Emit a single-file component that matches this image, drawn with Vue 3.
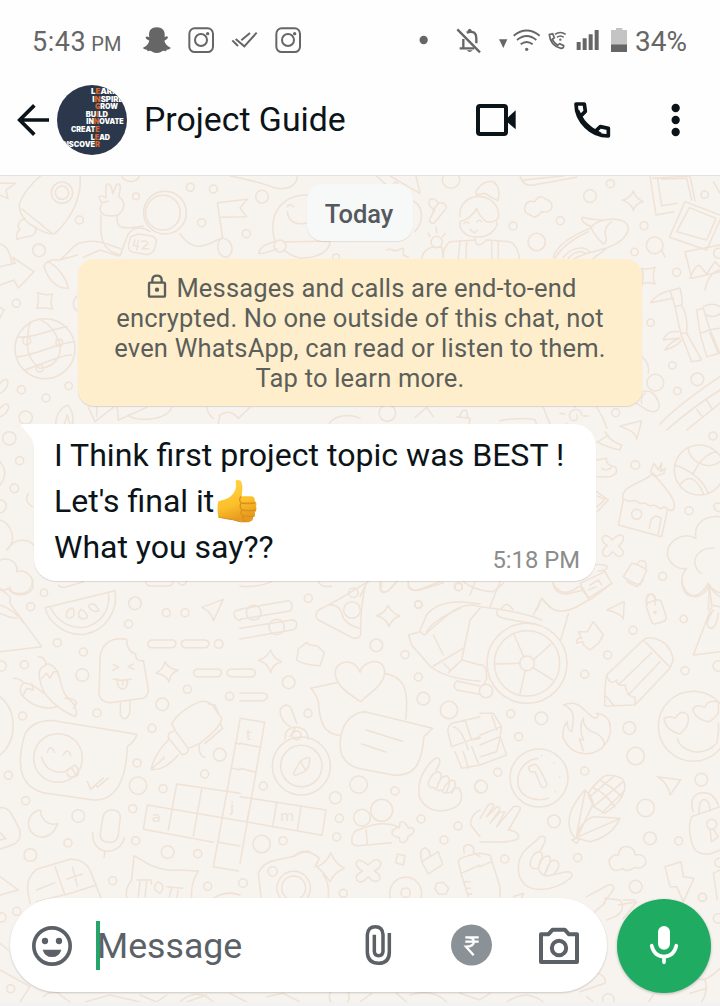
<script setup>
const mottos = [
  { y: 282, x: 273, w: 82, a: 'L', b: 'E', c: 'ARN' },
  { y: 305, x: 277, w: 93, a: 'I', b: 'N', c: 'SPIRE' },
  { y: 328, x: 285, w: 69, a: '', b: 'G', c: 'ROW' },
  { y: 350, x: 257, w: 67, a: 'BU', b: 'I', c: 'LD' },
  { y: 373, x: 259, w: 112, a: 'IN', b: 'N', c: 'OVATE' },
  { y: 396, x: 213, w: 86, a: 'CREAT', b: 'E', c: '' },
  { y: 419, x: 272, w: 58, a: 'L', b: 'E', c: 'AD' },
  { y: 441, x: 184, w: 116, a: 'DISCOVE', b: 'R', c: '' },
]

// Wallpaper doodles, grouped in tiles; three units inside a tile are one pixel.
const tiles = [
  {
    x: 0, y: 170,
    circles: [[186, 68, 32], [186, 68, 20], [408, 79, 10], [238, 150, 12], [117, 241, 19], [49, 400, 12], [571, 52, 12], [640, 57, 12], [605, 158, 12], [786, 80, 19], [739, 191, 12], [495, 128, 64], [489, 128, 52], [840, 228, 18], [135, 536, 90], [80, 512, 12], [178, 518, 10], [119, 595, 11], [206, 648, 11], [64, 659, 12], [138, 684, 12], [77, 743, 20], [1008, 262, 10]],
    paths: [
      'M58 104 C65 75 95 40 122 18 M240 18 C246 80 215 145 165 190 C145 195 125 185 104 171 C80 158 58 135 58 104 M66 117 L158 192 M75 145 C50 155 52 175 60 178 C45 190 50 210 52 208 C75 195 110 210 108 171',
      'M0 40 L46 40 L18 60 L24 86 L0 75', 'M365 18 C375 40 410 40 418 18',
      'M306 98 C290 80 300 72 318 84 L318 46 C325 36 336 44 338 72 L350 44 C360 36 365 50 356 80 C378 92 376 120 352 136 C330 140 305 140 300 118 Z M306 98 L325 94 M303 136 C300 210 305 240 360 255 M352 136 C345 175 365 180 430 168 M360 258 L383 195 C395 175 420 165 450 185',
      'M392 200 L415 192 L455 198 C470 202 472 215 465 232 C460 250 450 255 435 253 L400 247 C385 243 383 235 387 220 Z M405 210 L400 226 L416 230 M415 210 L410 240 M425 214 C440 210 448 218 440 224 L426 236 L445 236',
      'M362 236 C310 220 290 205 235 220 C210 235 200 255 180 270 C150 265 130 280 133 292 C145 330 170 355 205 355 M180 270 L232 255 M142 275 C170 285 200 325 205 355 M250 262 L300 240 L355 258',
      'M652 98 L742 88 L720 114 L740 140 L664 142 M652 98 L668 204 M668 204 C645 215 650 260 680 262 C705 250 700 210 668 204 M540 192 C590 260 630 215 668 204',
      'M690 18 C760 30 800 45 830 55 C860 60 890 50 892 18',
      'M825 215 C810 160 820 110 870 85 Q895 74 925 75 M862 110 Q868 98 880 110 M862 125 C865 158 890 165 920 160 M825 215 C800 220 780 230 776 250 C790 255 815 240 832 237 M852 216 L990 213 C990 240 960 265 900 264 C870 258 855 242 850 240',
      'M0 222 C15 225 30 240 35 280 M0 290 L45 280 L38 262 L102 305 L55 354 L42 330 L0 345', 'M113 368 Q134 378 158 372 Q148 393 158 418 Q134 410 110 415 Q119 394 113 368 Z',
      'M52 500 C90 510 170 470 202 470 M50 560 C95 560 170 520 220 515 M75 600 C110 590 190 550 215 555 M90 455 C80 500 70 560 119 595 M119 595 C180 590 185 540 178 518 C165 480 145 460 120 448',
      'M0 640 Q22 615 24 640 Q20 660 0 670 M0 715 Q24 690 26 712 Q20 735 0 740 M0 412 L12 420 L0 444 M168 766 C165 735 185 710 205 705 C225 740 225 765 200 780 M190 770 L202 735 L212 770',
      'M230 378 Q210 405 230 422 M265 712 L285 755 L340 712 M290 712 L290 740 M352 712 L355 750 L440 712 M385 735 C400 755 500 755 515 712 M620 712 Q625 735 640 745 M655 760 L660 735 Q690 715 715 745 L750 712 M985 765 C1000 735 1050 730 1080 745',
    ],
  },
  {
    x: 360, y: 170,
    circles: [[273, 29, 26], [459, 168, 12], [530, 216, 26], [601, 152, 12], [690, 78, 19], [751, 41, 12], [852, 167, 12], [824, 246, 11], [884, 226, 25], [1034, 74, 11], [950, 307, 12], [872, 458, 11], [937, 586, 11], [886, 638, 25], [952, 663, 11], [1012, 628, 19], [1076, 250, 15], [767, 728, 12], [230, 216, 17], [82, 729, 25]],
    paths: [
      'M50 18 L90 55 L105 35 L145 65 M90 18 L180 70 L168 18 M150 90 C190 100 195 150 165 185',
      'M209 89 Q225 80 235 100 L250 98 Q265 110 255 120 L222 160 Q205 160 210 145 L225 118 Q200 110 209 89 M235 100 L218 122',
      'M300 140 C295 105 325 75 365 80 C405 85 420 120 415 145 Q400 160 378 155 Q355 135 350 115 Q335 145 300 155 M350 75 Q345 60 355 55 Q370 30 400 35 Q425 55 413 92 Q390 80 375 70 Z M300 155 C295 180 320 200 340 200 Q380 205 400 182 Q415 165 410 155 M312 160 q8 -8 15 0 M350 155 q8 -8 15 0 M330 178 q15 18 22 2',
      'M345 205 C345 230 360 230 380 210 L450 215 Q475 230 478 265 M345 210 L270 215 Q250 230 248 262 M300 212 L295 265 M320 212 L318 265 M395 212 L395 265 M415 212 L415 265',
      'M185 265 Q190 240 215 232 L245 232 Q250 250 250 262 M210 200 L205 190 M230 188 L228 170 M248 200 L255 190 M80 240 Q90 235 105 243 L130 235 L130 255 L145 262',
      'M495 110 Q500 90 525 95 Q535 70 558 88 Q580 95 575 115 Q565 130 545 125 Q525 150 512 135 Q490 130 495 110 Z',
      'M480 18 Q490 50 520 45 L650 22 M490 30 L610 18',
      'M580 262 C590 225 640 195 690 175 Q710 150 750 148 C790 145 810 160 803 185 C790 215 760 230 700 245 Q655 255 630 275 M690 168 Q660 155 667 142 Q700 150 725 150 M692 172 Q710 205 730 222 Q745 215 735 190 Q735 170 755 155 M585 265 Q610 220 685 185 M610 262 C640 225 680 230 690 248 M625 265 Q650 235 680 250 M700 265 L740 235',
      'M820 62 Q825 85 850 95 Q825 100 820 122 Q815 100 787 90 Q812 85 820 62 Z',
      'M870 18 L888 135 L940 125 M878 25 L990 18 L1005 92 M893 28 L905 107 L950 100 M905 28 L980 25 L995 90 M975 95 L1080 135 M975 95 L928 202 L1040 240 L1080 150 M988 113 L1068 145 L1040 210 L950 185 Z M905 240 L915 262',
      'M975 245 L1080 225 M975 245 L995 325 L1080 305 M990 325 Q1010 275 1022 290 L1040 312 L1065 275 L1080 290 M1035 360 Q1045 310 1078 300 M845 295 Q860 300 885 292 Q875 325 885 342 Q860 335 845 342 Q855 315 845 295 M1060 35 L1080 70',
      'M930 362 L960 354 Q970 395 965 405 L945 410 Q940 390 930 362 M945 410 L962 490 L980 490 Q985 440 965 405 M962 490 L995 575 L1025 570 L980 490 M930 362 Q890 370 872 398 Q910 390 940 385 M955 485 Q920 480 910 510 Q940 505 960 505 Q930 515 915 540 Q950 530 965 510',
      'M1010 420 L1030 415 L1050 480 L1020 490 Z M1020 490 L1040 560 L1080 550 L1050 480 M1050 490 L1075 550 M1030 410 Q1055 395 1080 410 M1040 435 Q1060 445 1080 432 M1045 480 L1080 475',
      'M845 560 Q870 580 865 610 M848 665 Q885 655 898 705 Q895 735 860 720 L830 700 M855 670 Q840 680 845 700',
      'M900 762 C950 710 1020 660 1080 620 M920 780 Q1000 710 1080 660 M980 780 L1080 700 M1025 738 L1010 718 M1055 715 L1040 690',
      'M550 712 Q560 745 580 780 M710 712 Q735 750 740 775 M165 742 L200 712 L220 740 M290 740 L330 745 L325 780 M300 742 Q300 720 318 720 Q325 735 320 744 M420 752 Q500 740 525 750 L535 775 M665 735 C665 715 635 712 628 735 C628 760 660 755 650 735 M645 712 L645 703 M600 730 L615 732 M685 738 L670 738 M620 760 L610 770',
    ],
  },
  {
    x: 0, y: 410,
    circles: [[28, 85, 20], [59, 152, 12], [43, 235, 13], [132, 548, 11], [92, 590, 12]],
    paths: [
      'M0 155 C20 180 18 200 0 225 M0 270 C20 270 25 290 10 305 L0 310 M0 330 C30 335 55 390 20 420 M85 250 Q70 275 98 290 M20 420 C45 380 90 385 105 410 M0 450 C30 440 55 460 50 485 C80 475 105 505 98 535 C80 565 30 555 25 535 C10 545 0 540 0 540',
    ],
  },
  {
    x: 360, y: 410,
    circles: [[1059, 78, 12], [826, 165, 13], [1018, 180, 75], [987, 302, 12], [830, 313, 15], [908, 499, 12], [296, 531, 11], [175, 584, 11]],
    paths: [
      'M780 48 L845 32 L830 88 Q825 68 810 62 Z M735 65 Q750 95 785 105 L780 120 Q735 110 710 95 M745 75 L715 95 M710 150 L740 145 Q735 165 765 170 Q780 190 750 200 L710 200 M725 175 Q740 185 755 172',
      'M945 165 C990 180 1030 210 1045 250 M985 115 C985 150 1040 185 1080 155 M960 225 C985 190 1010 205 1030 250 M1000 190 Q1030 130 1070 125',
      'M788 265 C785 225 840 225 880 190 C910 230 950 265 942 295 C935 310 920 295 912 290 C900 305 890 285 880 285 C865 295 860 275 850 280 C835 285 830 268 820 272 C805 280 800 270 788 265 M790 270 L775 345 L905 380 L922 302 M868 355 L873 330 Q885 310 903 325 L895 372 M872 185 L882 160 L895 180 L905 158 L902 185 L915 175 L912 190 L885 200 Z',
      'M728 382 Q738 368 757 390 Q778 366 790 380 Q793 395 775 408 Q797 425 788 435 Q775 447 758 425 Q742 448 730 435 Q722 420 742 406 Q722 395 728 382 Z',
      'M790 500 L815 460 Q840 465 860 480 L840 525 Q815 520 790 500 M832 463 Q838 445 855 455 Q862 470 855 478 M710 245 L745 270 L712 305 M712 258 L735 268 L712 290',
      'M1080 320 C1025 315 1000 350 1008 385 C970 365 920 390 922 435 C930 470 965 480 980 475 C950 510 975 560 1010 560 Q1035 555 1048 525 Q1060 550 1080 560 M1048 525 L1045 600 M1062 415 C1020 410 995 445 1008 470 Q1012 485 1025 490 M1080 280 Q1060 275 1062 290 Q1065 305 1080 305',
      'M660 520 L735 485 L755 520 L690 570 Z M690 525 L715 510 L725 525 M580 520 C590 545 620 560 655 530 M700 465 Q730 460 742 470 Q740 485 715 482 M65 520 C55 560 85 550 105 520 M145 525 Q150 545 180 540 L250 518 M310 515 Q350 545 400 545 L430 520 M0 560 L20 520 M530 600 L545 565 L575 595 M860 585 Q855 555 875 552 Q890 565 885 585',
    ],
  },
  {
    x: 0, y: 580,
    circles: [[405, 70, 19], [386, 132, 12], [172, 188, 12], [250, 216, 12], [247, 285, 19], [499, 98, 12], [555, 98, 12], [656, 192, 13], [73, 254, 12], [4, 258, 15], [68, 408, 12], [291, 399, 12], [487, 373, 19], [562, 328, 12], [689, 349, 12], [456, 445, 12], [659, 524, 19], [614, 582, 12], [411, 549, 12], [414, 617, 26], [489, 626, 12], [398, 686, 12], [25, 586, 12], [77, 662, 12], [235, 708, 19], [91, 825, 19], [204, 789, 12], [407, 782, 12], [503, 816, 19], [593, 821, 12], [338, 902, 12], [623, 919, 12], [174, 534, 73]],
    paths: [
      'M135 83 L345 32 C355 90 320 150 255 163 C195 170 145 125 135 83 M152 84 C175 130 220 150 262 140 C305 125 330 90 326 42 M200 112 Q195 90 217 84 Q225 90 221 107 Q210 118 200 112 M238 112 Q232 98 243 88 Q260 95 262 112 Q248 122 238 112 M265 80 Q270 66 286 75 L298 92 Q280 100 265 80',
      'M378 178 C330 170 300 195 300 240 L297 345 Q305 368 330 368 L430 355 Q450 345 443 315 L430 242 Q405 245 407 222 Q380 215 380 178 M340 253 l16 9 l-18 9 M400 252 l-16 8 l17 8 M340 297 Q365 304 395 297 M352 298 Q350 325 368 327 Q385 325 382 300 M368 300 L368 315 M361 368 L361 405 Q375 430 389 400 L390 362',
      'M0 25 L30 50 L30 70 L125 200 L0 215 M0 75 Q45 90 72 130 M50 115 L25 110 L0 100 M30 20 Q30 45 70 40 Q95 35 98 0',
      'M115 230 Q137 230 138 255 Q110 265 120 300 C125 350 180 390 225 410 Q235 400 220 370 C170 330 190 290 165 265 Q145 245 138 255 M125 295 L140 280 L150 295 L160 275 L175 275 M40 295 Q60 295 70 308 Q55 325 65 345 C95 380 140 390 170 380 M70 308 Q100 310 130 340 M70 345 L80 325 L100 330 L95 310 M195 355 Q225 355 230 370 L220 385 M0 350 C55 395 50 485 0 525',
      'M455 180 H518 Q528 182 528 192 Q525 203 515 203 H455 Q444 201 444 191 Q445 181 455 180 M555 180 H616 Q628 183 627 192 Q624 203 615 203 H555 Q544 200 544 191 Q545 181 555 180 M592 268 H656 Q665 270 665 279 Q662 290 652 290 H590 Q582 288 581 279 Q582 268 592 268 M720 268 H690 Q681 271 681 279 Q684 290 695 290 H720 M176 16 Q180 25 200 20 L250 5 M437 5 Q440 19 455 18 H505 Q518 17 520 5 M535 8 Q548 25 560 5',
      'M605 82 L670 58 L640 122 Q635 95 605 82 M720 90 Q700 90 702 105 Q708 120 720 122 M495 245 Q505 268 535 270 Q510 280 507 305 Q495 282 467 279 Q490 270 495 245 Z',
      'M100 435 Q135 415 180 425 L410 463 Q408 480 382 500 C380 560 365 665 280 660 L130 638 C60 620 50 560 70 480 Q75 450 100 435 M125 532 C135 570 170 585 205 572 M142 517 q8 -28 22 0 M190 525 q14 -25 22 2 M195 575 L225 555 Q240 570 234 585 Q210 600 200 580 M215 565 L225 580 M262 605 L272 628 L310 594 M288 614 L292 622 L325 594',
      'M527 455 L515 430 Q540 390 600 365 Q625 360 640 380 L665 415 Q665 440 600 490 L565 505 M527 455 L565 505 Q565 525 545 523 L505 473 Q503 455 520 455 M505 480 Q465 520 453 568 Q490 575 535 525 M453 568 L485 540 Q495 535 490 530 M625 372 L645 375 L655 400 M598 495 Q595 530 615 532 M660 430 L668 445 L615 490',
      'M720 640 L530 612 L505 750 M442 675 L720 722 M442 675 L430 748 L640 787 M605 628 L580 768 M720 420 L680 640 L640 860 L715 873 M698 565 L720 570 M655 787 L720 798 M705 490 L720 492',
      'M335 690 Q365 690 360 720 L355 765 Q350 790 325 787 Q298 785 301 760 L308 715 Q312 690 335 690 M278 758 C275 830 360 830 373 772 M315 812 L312 832',
      'M122 690 C75 695 70 765 125 772 Q160 770 173 730 Q155 738 138 725 Q120 710 122 690 Z M0 683 C35 680 40 720 58 745 Q68 785 35 795 L0 808 M0 758 L18 776 L0 780 M0 890 L55 930 L0 945',
      'M90 970 L83 930 Q80 890 110 868 L210 838 Q250 835 270 870 L305 960 M165 860 L195 945 L290 915 M110 930 L165 908 M200 898 L247 882 M218 862 L232 918 M190 945 L110 965',
      'M383 960 Q370 930 395 900 L402 827 L450 855 Q500 875 530 870 L595 873 Q570 910 575 960 M412 900 L452 900 L455 912 M420 905 L415 950 M440 905 L435 950 M475 905 Q450 925 480 940 Q500 920 475 905 M500 920 L548 925 M515 925 L508 950 M535 930 L530 955 M640 955 Q680 930 720 945',
    ],
    letters: [[455, 727, 'a'], [690, 697, 'j']],
  },
  {
    x: 240, y: 580,
    circles: [[205, 55, 12], [340, 38, 14], [336, 90, 25], [535, 73, 11], [409, 196, 19], [495, 224, 12], [146, 307, 19], [204, 400, 12], [535, 291, 12], [550, 356, 19], [627, 390, 26], [170, 466, 13], [184, 558, 87], [184, 558, 62], [70, 618, 12], [286, 653, 18], [356, 614, 26], [465, 633, 12], [425, 691, 33], [366, 713, 25], [298, 715, 12], [290, 771, 12], [65, 792, 26], [129, 782, 12], [543, 717, 12], [654, 738, 12], [612, 780, 12], [98, 874, 14], [161, 924, 50], [161, 924, 36], [310, 940, 12], [497, 938, 14], [497, 940, 48], [9, 909, 13], [41, 98, 22], [110, 141, 23], [655, 20, 12]],
    paths: [
      'M0 88 L145 62 Q160 68 155 85 L150 93 L0 118 M0 145 L155 120 Q170 120 170 132 Q170 148 155 150 L0 177 M0 18 Q50 25 95 5 M235 5 Q245 25 275 18',
      'M228 105 Q230 90 245 85 C300 60 340 30 385 5 M375 20 Q360 90 362 165 Q355 180 335 172 L235 120 Q228 115 228 105 M265 75 Q300 70 310 115 Q330 140 360 145 M443 75 Q455 100 480 108 Q455 115 447 140 Q440 115 410 107 Q438 98 443 75 Z M92 210 Q100 235 124 245 Q97 252 92 278 Q85 250 55 241 Q80 235 92 210 Z',
      'M175 207 L200 187 Q205 197 232 197 L253 218 L240 257 Q190 255 170 240 Z M0 267 H35 Q46 270 46 279 Q45 289 35 291 H0 M0 339 H70 Q83 342 82 350 Q80 360 70 362 H0',
      'M420 5 Q415 50 445 32 L470 5 M505 5 Q500 38 535 30 L600 5 M705 5 L690 45 M720 72 Q600 50 560 105 L540 150 M720 80 Q670 60 605 120 L553 165 L540 155 L506 165 L515 195 L570 258 C610 290 660 300 720 303 M580 165 L610 225 M580 258 L670 205 M665 240 L690 120 L720 85 M625 278 L665 240 L720 255 M650 303 L720 318 M650 303 Q635 320 650 330 L720 343 M560 155 Q580 120 660 85 M610 250 L630 270',
      'M360 277 C365 245 430 225 434 275 C435 315 380 345 362 365 C330 345 285 315 286 280 C285 240 345 230 360 277 Z M290 308 L212 325 Q230 345 235 365 C240 430 250 460 300 467 M434 280 C480 290 510 310 497 418',
      'M375 395 Q345 395 320 425 C300 455 290 510 315 540 Q330 560 365 567 L460 585 C525 590 545 550 552 470 L578 445 Z M378 450 L487 484 M365 492 L437 516',
      'M0 415 L74 427 L0 850 M0 490 L62 502 M0 565 L48 577 M0 650 L258 690 L246 766 L0 722 M35 655 L20 725 M110 668 L98 740 M183 680 L172 752',
      'M150 440 Q120 420 120 390 Q135 365 152 382 L170 430 M165 445 L150 470 M135 478 Q135 440 170 442 Q205 445 204 478 M160 580 L180 545 Q200 530 209 533 Q210 560 195 575 L165 586 Z M182 545 L197 572',
      'M538 650 C530 600 555 560 585 535 Q600 530 600 548 L588 572 M565 610 Q575 575 595 575 Q610 580 600 600 L590 625 M590 625 Q600 585 622 588 Q635 600 620 635 M608 632 Q625 595 643 602 Q650 620 635 640 M565 610 Q565 625 580 622 Q590 635 602 630 Q615 645 635 635 Q640 620 658 625 C675 660 660 690 600 693 Q555 690 538 650',
      'M335 785 Q335 752 360 748 C400 730 440 725 475 740 M335 785 Q338 798 355 797 L455 788 M378 750 L382 792 M480 728 Q488 720 500 735 L505 745 Q520 740 522 752 Q520 765 505 767 Q500 795 480 785 L478 773 Q455 770 456 755 Q465 740 478 743 Z',
      'M720 410 L635 430 Q620 440 625 460 L635 500 L720 470 M640 440 Q665 445 685 510 M675 420 L695 480 L720 475 M645 515 L665 565 L720 555 M670 515 L685 565 M695 500 L715 550 M720 600 Q700 610 705 625 L720 640 M720 690 Q690 705 692 735 L720 770',
      'M63 950 L55 880 Q70 845 110 840 L165 828 Q200 800 238 835 M238 835 L225 860 M250 885 Q270 910 265 955 M165 825 Q185 810 210 815 M272 818 Q285 850 313 865 Q280 880 270 905 Q250 875 230 860 Q260 850 272 818 Z',
      'M348 850 Q355 830 384 855 Q410 828 423 848 Q422 865 403 873 Q425 885 418 900 Q400 912 385 890 Q362 915 350 900 Q343 885 368 873 Q350 865 348 850 M473 822 L495 827 L490 855 L467 848 Z M545 845 L595 815 L608 853 L565 882 Z M545 840 Q535 810 555 803 Q570 810 570 828 M590 910 L610 907 L626 925 L618 942 L597 943 L584 926 Z',
      'M673 820 Q665 790 690 795 Q705 800 700 818 L720 830 M655 845 Q655 830 720 820 M655 845 L663 880 L720 855 M663 880 L685 950 M672 905 H690 M677 925 H690 M682 942 H695',
    ],
    letters: [[18, 480, 't'], [120, 724, 'm']],
  },
  {
    x: 480, y: 580,
    circles: [[141, 250, 120], [141, 250, 98], [141, 250, 22], [611, 117, 11], [459, 151, 12], [383, 225, 12], [314, 283, 12], [615, 272, 12], [715, 258, 16], [184, 415, 19], [92, 401, 12], [116, 470, 12], [18, 333, 20], [53, 577, 12], [3, 620, 19], [177, 594, 87], [314, 573, 12], [448, 444, 19], [467, 528, 26], [640, 439, 105], [497, 684, 26], [664, 599, 19], [222, 724, 19], [510, 775, 19], [596, 783, 12], [293, 833, 12], [74, 837, 12], [467, 920, 19], [667, 952, 12], [718, 848, 13], [695, 733, 15]],
    paths: [
      'M103 165 L132 232 M212 193 L160 240 M218 300 L158 262 M120 340 L136 272 M45 252 L120 250 M0 80 Q130 95 185 120 M52 92 Q45 110 70 115 L165 132 M65 85 Q80 60 100 90 M30 80 L60 5 M160 105 L185 55 C210 90 240 110 300 75 L325 60 M265 102 L242 180 M0 255 Q20 250 20 295 L10 315',
      'M218 8 Q225 42 260 42 L310 30 M300 20 L325 55 L395 10 M325 30 L350 20 M440 5 L470 20 L490 0 M380 90 L433 65 L430 117 Q420 98 380 90 M508 67 L532 59 Q542 59 545 68 L558 108 Q560 120 552 124 L526 132 Q517 132 514 124 L499 80 Q499 70 508 67 M500 65 Q495 40 515 42 Q530 50 525 62 M525 97 m-3 0 a3 3 0 1 0 6 0 a3 3 0 1 0 -6 0',
      'M295 155 L322 155 L340 125 L370 165 L355 190 L330 210 L310 195 Q315 180 290 190 Q290 170 305 175 Z M605 5 Q610 50 640 48 Q665 45 685 10 Q700 35 720 38 M688 15 L695 75 L720 80 M695 80 L640 225 L720 215 M700 90 Q670 135 690 145 Q710 145 715 100',
      'M380 285 L490 180 Q500 170 520 175 Q570 185 580 240 L570 265 L465 375 L375 378 Q372 335 380 285 M490 180 L570 262 M415 315 L515 218 M445 345 L540 245 M380 285 Q390 320 410 300 Q410 320 435 315 Q440 350 465 352 L465 375 M375 345 L400 375',
      'M250 375 C300 355 315 400 345 415 Q360 410 350 400 C400 405 405 465 365 505 C330 530 275 530 250 475 Q245 445 262 425 Q262 450 275 455 C280 420 290 390 250 375 M310 415 Q295 440 310 480 L298 478 L310 512 M310 415 Q310 450 350 460 Q380 480 370 500',
      'M592 475 C600 515 670 535 710 490 M552 415 Q570 405 585 415 Q605 385 623 405 Q633 435 600 462 Q555 450 552 415 M638 390 Q645 370 675 382 Q680 360 715 365 V400 Q700 420 685 425 Q650 420 638 390 M715 430 Q718 450 710 490 M0 400 L40 400 L65 440 L60 470 L80 525 L0 555 M0 465 L65 440 M60 470 L0 495 M35 405 L50 450 M60 475 L50 515 L0 530',
      'M175 535 C115 540 90 620 140 650 Q170 665 205 655 M145 560 L165 553 Q175 555 200 610 Q202 625 185 622 L165 575 L150 575 Z M184 527h1 M221 548h1 M239 590h1 M225 635h1',
      'M325 645 Q325 630 370 590 Q395 580 425 595 Q440 610 432 635 Q425 665 375 700 L340 680 Z M340 625 Q365 630 405 680 M360 600 Q400 625 425 650 M330 650 L400 590 M340 680 L430 605 M365 700 L430 635 M315 630 Q260 690 268 740 Q275 770 290 775 L340 670 Q335 650 315 630 M315 635 L290 765 M290 775 Q300 725 340 710 L420 715 Q395 770 330 785 L290 775 L275 780 L290 790 L300 775 M295 770 L415 718',
      'M532 590 L602 600 L570 645 Q565 610 532 590 M640 695 Q625 655 655 640 Q700 630 715 675 M658 700 Q655 665 670 658 Q690 660 690 692 M635 710 L720 680 M635 710 Q620 750 640 800 Q650 825 690 822 L720 810 M690 750 L695 785 L715 770 L700 748',
      'M0 715 L25 675 Q45 665 40 680 L20 710 M20 710 L50 680 Q65 680 55 695 L30 730 M30 730 L60 695 L75 695 L50 740 L100 680 Q125 675 120 690 L85 750 Q120 755 115 775 Q100 790 0 785',
      'M115 865 C115 810 155 800 180 770 Q200 765 195 785 L180 815 M150 855 Q155 815 180 815 Q195 825 180 845 L175 865 M175 865 Q185 825 205 828 Q220 835 195 880 M195 885 Q205 840 225 840 Q250 850 220 885 M150 855 Q155 870 175 865 Q185 895 215 885 L260 875 Q280 875 275 890 C225 940 115 950 115 865',
      'M387 840 Q400 820 415 825 Q420 795 445 800 Q465 805 465 825 Q500 820 497 850 Q485 870 465 862 Q435 880 430 865 Q390 885 387 840 M555 860 L603 845 L610 890 L642 895 L610 965 L590 920 L570 920 Z M720 870 L700 880 L712 960 M320 950 L385 915 Q405 910 400 930 L370 970 M100 950 L130 940 L125 955 M0 820 L30 825 L60 920 L60 950 M0 860 L35 845 M430 960 L465 960',
    ],
  },
  {
    x: 0, y: 880,
    circles: [[50, 94, 12], [4, 112, 14], [32, 326, 12], [1018, 350, 30]],
    paths: [
      'M0 270 L90 320 L60 366 M0 190 L25 210 M130 350 Q150 330 180 340 M180 345 L210 366 M255 366 L330 345 L420 366 M420 345 L470 366 L500 345 M540 366 Q590 320 640 366 M560 366 L620 345 M690 340 L740 366 M800 350 L850 340 L900 366',
    ],
  },
  {
    x: 360, y: 880,
    circles: [[1028, 52, 12], [1074, 115, 14], [745, 358, 17]],
    paths: [
      'M735 70 Q700 95 695 110 M735 55 L780 60 Q800 90 765 110 L740 120 M775 75 L830 65 L790 115 M715 280 Q740 290 735 310 L660 335 M1005 290 Q1030 315 1080 265 M1035 300 Q1045 335 1025 366 M990 340 L1040 325 M880 345 L865 366 M680 350 L700 366 M0 366 L35 340 M110 340 L140 366 M150 345 Q220 325 260 366 M300 340 L360 360 L390 340 M440 366 Q500 325 550 366',
    ],
  },
]
</script>

<template>
  <div class="screen">
    <div class="status">
      <div class="clock">5:43 <span>PM</span></div>
      <svg class="ic snap" viewBox="429 75 84 90" width="28" height="30" fill="#666">
        <path d="M470 82 C490 82 496 95 494 112 Q501 106 504 112 Q504 117 493 122 Q497 137 512 143 Q511 148 500 149 L498 154 Q489 150 483 156 Q470 162 458 156 Q450 150 443 154 L441 149 Q430 148 429 143 Q444 137 448 122 Q436 117 437 111 Q441 107 448 112 C445 95 451 82 470 82Z" />
      </svg>
      <svg class="ic insta" viewBox="564 75 78 90" width="26" height="30" fill="none" stroke="#666" stroke-width="6">
        <rect x="568" y="85" width="71" height="71" rx="16" /><circle cx="603" cy="120" r="18" /><circle cx="623" cy="101" r="5" fill="#666" stroke="none" />
      </svg>
      <svg class="ic checks" viewBox="694 75 81 90" width="27" height="30" fill="none" stroke="#666" stroke-width="6">
        <path d="M698 121 L715 138 M708 117 L734 139 L771 98 M725 121 L751 99" />
      </svg>
      <svg class="ic insta" viewBox="564 75 78 90" width="26" height="30" fill="none" stroke="#666" stroke-width="6">
        <rect x="568" y="85" width="71" height="71" rx="16" /><circle cx="603" cy="120" r="18" /><circle cx="623" cy="101" r="5" fill="#666" stroke="none" />
      </svg>
      <svg class="ic right" viewBox="178 75 552 90" width="184" height="30" fill="none" stroke="#666" stroke-width="5.5">
        <circle cx="192" cy="120" r="12.500" fill="#666" stroke="none" />
        <path d="M293 88 L361 157" stroke-width="7" />
        <path d="M311 117 V145 M300 145 H344 M321 98 Q350 88 350 117 V130" stroke-width="7" />
        <path d="M324 91 Q330 82 336 91 V96 H324Z M321 151 H339 Q330 161 321 151Z" fill="#666" stroke="none" />
        <path d="M418 118 H443 L431 144Z" fill="#666" stroke="none" />
        <path d="M462 107 Q501 76 540 107 M472 120 Q501 96 530 120 M483 133 Q501 119 519 133" />
        <circle cx="501" cy="148" r="5" fill="#666" stroke="none" />
        <path d="M569 104 L579 101 L584 113 L578 118 Q584 130 594 136 L600 131 L612 137 Q613 145 604 145 Q572 138 569 104Z" stroke-width="5" />
        <path d="M586 103 Q602 92 618 103 M592 112 Q602 104 612 112" stroke-width="5" />
        <circle cx="602" cy="119" r="3.5" fill="#666" stroke="none" />
        <path d="M657 126 V150 M675 115 V150 M693 103 V150 M711 90 V150" stroke-width="12" />
      </svg>
      <svg class="ic" viewBox="750 75 54 90" width="18" height="30">
        <path d="M753 90 H768 V84 H787 V90 H801 V133 H753Z" fill="#c4c4c4" /><path d="M753 133 H801 V156 H753Z" fill="#666" />
      </svg>
      <div class="battery">34%</div>
    </div>

    <header class="bar">
      <svg viewBox="51 255 102 210" width="34" height="70" fill="none" stroke="#0b1418" stroke-width="11">
        <path d="M59 360 H147 M103 316 L59 360 L103 404" />
      </svg>
      <svg class="avatar" viewBox="171 255 210 210" width="70" height="70">
        <clipPath id="disc"><circle cx="276" cy="360" r="105" /></clipPath>
        <g clip-path="url(#disc)">
          <rect x="171" y="255" width="210" height="210" fill="#2b384b" />
          <text v-for="m in mottos" :key="m.y" :x="m.x" :y="m.y" :textLength="m.w" lengthAdjust="spacingAndGlyphs">{{ m.a }}<tspan>{{ m.b }}</tspan>{{ m.c }}</text>
        </g>
      </svg>
      <div class="title">Project Guide</div>
      <svg class="video" viewBox="345 255 126 210" width="42" height="70" fill="none" stroke="#0b1418" stroke-width="12">
        <rect x="354" y="318" width="84" height="84" rx="6" /><path d="M443 353 L467 331 V388 L443 367Z" fill="#0b1418" stroke="none" />
      </svg>
      <svg class="phone" viewBox="639 255 114 210" width="38" height="70" fill="none" stroke="#0b1418" stroke-width="11" stroke-linejoin="round">
        <path d="M648 312 H673 L676 334 L661 349 C671 369 685 382 706 394 L721 380 L745 385 V408 C695 409 648 364 648 312Z" /><path d="M652 331 L661 349 M706 394 L722 403" />
      </svg>
      <svg class="dots" viewBox="934 255 30 210" width="10" height="70" fill="#0b1418">
        <circle cx="948" cy="324" r="12.500" /><circle cx="948" cy="360" r="12.500" /><circle cx="948" cy="396" r="12.500" />
      </svg>
    </header>

    <main class="chat">
      <svg class="wallpaper" viewBox="0 176 720 830" width="720" height="830">
        <g v-for="(t, i) in tiles" :key="i" :transform="`translate(${t.x} ${t.y}) scale(.33333)`">
          <circle v-for="(c, j) in t.circles" :key="'c' + j" :cx="c[0]" :cy="c[1]" :r="c[2]" />
          <path v-for="(p, j) in t.paths" :key="'p' + j" :d="p" />
          <text v-for="(l, j) in t.letters || []" :key="'l' + j" :x="l[0]" :y="l[1]">{{ l[2] }}</text>
        </g>
      </svg>

      <div class="day">Today</div>

      <div class="notice">
        <div class="line l1">
          <svg viewBox="445 316 60 72" width="20" height="24" fill="none" stroke="#5b5f5b" stroke-width="7">
            <rect x="451" y="342" width="48" height="42" rx="3" /><path d="M461 342 V333 Q462 321 475 321 Q488 321 489 333 V342" /><circle cx="475" cy="363" r="6.5" fill="#5b5f5b" stroke="none" />
          </svg>
          <span>Messages and calls are end-to-end</span>
        </div>
        <div class="line l2">encrypted. No one outside of this chat, not</div>
        <div class="line l3">even WhatsApp, can read or listen to them.</div>
        <div class="line l4">Tap to learn more.</div>
      </div>

      <div class="bubble">
        <svg class="tail" viewBox="0 0 20 26" width="20" height="26"><path d="M2 0 H20 V26 H14 Q14 17 10 12 L1 2 Q0 0 2 0Z" fill="#fff" /></svg>
        <div class="msg m1">I Think first project topic was BEST !</div>
        <div class="msg m2">
          <span>Let's final it</span>
          <svg viewBox="650 206 126 138" width="42" height="46">
            <defs>
              <linearGradient id="skin" x1="0" y1="0" x2="0.300" y2="1">
                <stop offset="0" stop-color="#ffd84a" /><stop offset=".65" stop-color="#fcc02b" /><stop offset="1" stop-color="#e79a1f" />
              </linearGradient>
            </defs>
            <path d="M709 214 Q717 207 725 216 Q730 225 729 238 L727 261 H758 Q768 264 766 274 Q774 280 770 291 Q774 302 766 310 Q770 320 761 324 Q762 335 750 337 Q722 341 700 331 Q680 329 657 323 Q652 296 657 276 Q675 272 687 266 Q708 251 710 232 Z" fill="url(#skin)" />
            <path d="M724 263 Q717 273 726 281 Q718 292 728 302 Q720 313 731 319 Q728 330 738 336 M726 281 Q745 284 766 281 M728 302 Q747 306 768 302 M731 319 Q747 323 763 321" fill="none" stroke="#d9911c" stroke-width="4" stroke-linecap="round" />
            <path d="M657 323 Q680 329 700 331 Q722 341 750 337" fill="none" stroke="#dc8e20" stroke-width="3" />
          </svg>
        </div>
        <div class="msg m3">What you say??</div>
        <time>5:18 PM</time>
      </div>

      <div class="composer">
        <div class="field">
          <svg class="smile" viewBox="93 135 126 126" width="42" height="42" fill="#5b6166">
            <circle cx="156" cy="198" r="54.500" fill="none" stroke="#5b6166" stroke-width="11" />
            <circle cx="135" cy="183" r="9.500" /><circle cx="177" cy="183" r="9.500" />
            <path d="M128 209 H184 Q178 231 156 231 Q134 231 128 209Z" />
          </svg>
          <i class="caret"></i>
          <div class="placeholder">Message</div>
          <svg class="clip" viewBox="15 132 81 126" width="27" height="42" fill="none" stroke="#5b6166" stroke-width="10.500">
            <path d="M88 159 V218 Q87 250 56 250 Q24 250 22 218 V164 Q24 140 46 140 Q68 140 69 164 V214 Q68 227 56 227 Q44 227 43 214 V164" />
          </svg>
          <svg class="rupee" viewBox="273 132 123 126" width="41" height="42">
            <circle cx="334.500" cy="195" r="61.500" fill="#8b9297" />
            <path d="M316 172 H356 M316 185 H356 M318 172 Q341 171 342 185 Q341 200 318 200 L341 226" fill="none" stroke="#fff" stroke-width="7" />
          </svg>
          <svg class="camera" viewBox="534 138 126 120" width="42" height="40" fill="none" stroke="#5b6166" stroke-width="12" stroke-linejoin="round">
            <path d="M543 163 H565 L578 149 H614 L627 163 H651 V246 H543Z" /><circle cx="597" cy="204" r="21.500" />
          </svg>
        </div>
        <div class="mic">
          <svg viewBox="864 132 96 126" width="32" height="42" fill="none" stroke="#fff" stroke-width="11" stroke-linecap="round">
            <rect x="894" y="138" width="36" height="71" rx="18" fill="#fff" stroke="none" />
            <path d="M875 197 Q882 229 912 230 Q942 229 949 197 M912 232 V247" />
          </svg>
        </div>
      </div>
      <div class="edge"></div>
    </main>
  </div>
</template>

<style>
body {
  margin: 0;
  background: #fff;
}
</style>

<style scoped>
.screen {
  width: 720px;
  height: 1006px;
  display: flex;
  flex-direction: column;
  overflow: hidden;
  background: #fefefe;
  font-family: Roboto, "Liberation Sans", sans-serif;
}
svg {
  display: block;
  flex: none;
}
.status {
  height: 30px;
  padding: 25px 0 0 32px;
  display: flex;
  align-items: center;
  color: #666;
  white-space: nowrap;
}
.clock {
  width: 111px;
  padding-top: 5px;
  font-size: 27px;
  line-height: 30px;
  letter-spacing: 0.500px;
}
.clock span {
  font-size: 20px;
  margin-left: -2px;
  letter-spacing: 0;
}
.insta {
  margin-left: 17px;
}
.checks {
  margin-left: 17px;
}
.right {
  margin-left: 118px;
}
.right + .ic {
  margin-left: 7px;
}
.battery {
  margin-left: 7px;
  padding-top: 3px;
  font-size: 28px;
  line-height: 30px;
}
.bar {
  height: 90px;
  padding: 30px 0 0 17px;
  display: flex;
  align-items: flex-start;
  border-bottom: 1px solid #e2e2e2;
}
.avatar {
  margin-left: 6px;
}
.avatar text {
  font: 900 22px Inter, "Liberation Sans", sans-serif;
  fill: #fff;
}
.avatar tspan {
  fill: #d8672c;
}
.title {
  margin-left: 17px;
  width: 331px;
  font-size: 33.800px;
  line-height: 70px;
  color: #0b1418;
  white-space: nowrap;
}
.phone {
  margin-left: 56px;
}
.dots {
  margin-left: 60px;
}
.chat {
  position: relative;
  flex: 1;
  display: flex;
  flex-direction: column;
  background: #f7f3ee;
}
.wallpaper {
  position: absolute;
  left: 0;
  top: 0;
  fill: none;
  stroke: #efe2d6;
  stroke-width: 4.500;
  stroke-linejoin: round;
  stroke-linecap: round;
}
.wallpaper text {
  font: 44px "DejaVu Sans", sans-serif;
  fill: #efe2d6;
  stroke: none;
}
.day,
.notice,
.bubble,
.composer,
.edge {
  position: relative;
}
.day {
  align-self: center;
  width: 106px;
  height: 57px;
  margin-top: 8px;
  border-radius: 16px;
  background: #f7f8f8;
  box-shadow: 0 1px 1px rgba(0, 0, 0, 0.08);
  text-align: center;
  font-size: 25.500px;
  font-weight: 500;
  line-height: 61px;
  text-indent: -2px;
  color: #54595e;
}
.notice {
  align-self: center;
  width: 564px;
  height: 133px;
  padding-top: 14px;
  margin-top: 18px;
  border-radius: 16px;
  background: #ffeecb;
  box-shadow: 0 1px 1px rgba(0, 0, 0, 0.12);
  color: #5b5f5b;
  font-size: 25.500px;
  line-height: 30px;
  letter-spacing: 0.190px;
}
.line {
  height: 30px;
  display: flex;
  justify-content: center;
  white-space: nowrap;
}
.l1 {
  gap: 9px;
  padding-left: 4px;
}
.l1 svg {
  margin-top: 1px;
}
.bubble {
  width: 542px;
  height: 149px;
  padding: 8px 0 0 20px;
  margin: 18px 0 0 34px;
  border-radius: 0 22px 22px 22px;
  background: #fff;
  box-shadow: 0 1px 1px rgba(0, 0, 0, 0.12);
}
.tail {
  position: absolute;
  left: -14px;
  top: 0;
}
.msg {
  height: 46px;
  display: flex;
  align-items: center;
  font-size: 32px;
  line-height: 46px;
  color: #0b1418;
  white-space: nowrap;
}
.m1 {
  font-size: 32.100px;
}
.m2 svg {
  margin-left: 2px;
}
time {
  position: absolute;
  right: 16px;
  bottom: 7px;
  font-size: 23.800px;
  line-height: 28px;
  color: #8c8c8c;
}
.composer {
  display: flex;
  height: 94px;
  margin: 317px 0 0 10px;
}
.field {
  width: 597px;
  display: flex;
  align-items: center;
  border-radius: 47px;
  background: #fff;
  box-shadow: 0 1px 2px rgba(0, 0, 0, 0.180);
}
.smile {
  margin-left: 21px;
  margin-top: 2px;
}
.caret {
  width: 4px;
  height: 49px;
  margin-left: 23px;
  background: #26a56a;
}
.placeholder {
  width: 268px;
  margin-left: -3px;
  padding-top: 3px;
  font-size: 35.700px;
  line-height: 91px;
  color: #5b6166;
}
.clip {
  margin-top: -1px;
}
.rupee {
  margin-left: 59px;
  margin-top: -1px;
}
.camera {
  margin-left: 46px;
  margin-top: 2px;
}
.mic {
  width: 94px;
  height: 94px;
  margin: 1px 0 0 10px;
  border-radius: 50%;
  background: #1fab61;
  box-shadow: 0 1px 3px rgba(0, 0, 0, 0.250);
  display: flex;
  align-items: center;
  justify-content: center;
}
.mic svg {
  margin-top: -2px;
}
.edge {
  height: 4px;
  margin-top: auto;
  background: #f2f2f2;
}
</style>
